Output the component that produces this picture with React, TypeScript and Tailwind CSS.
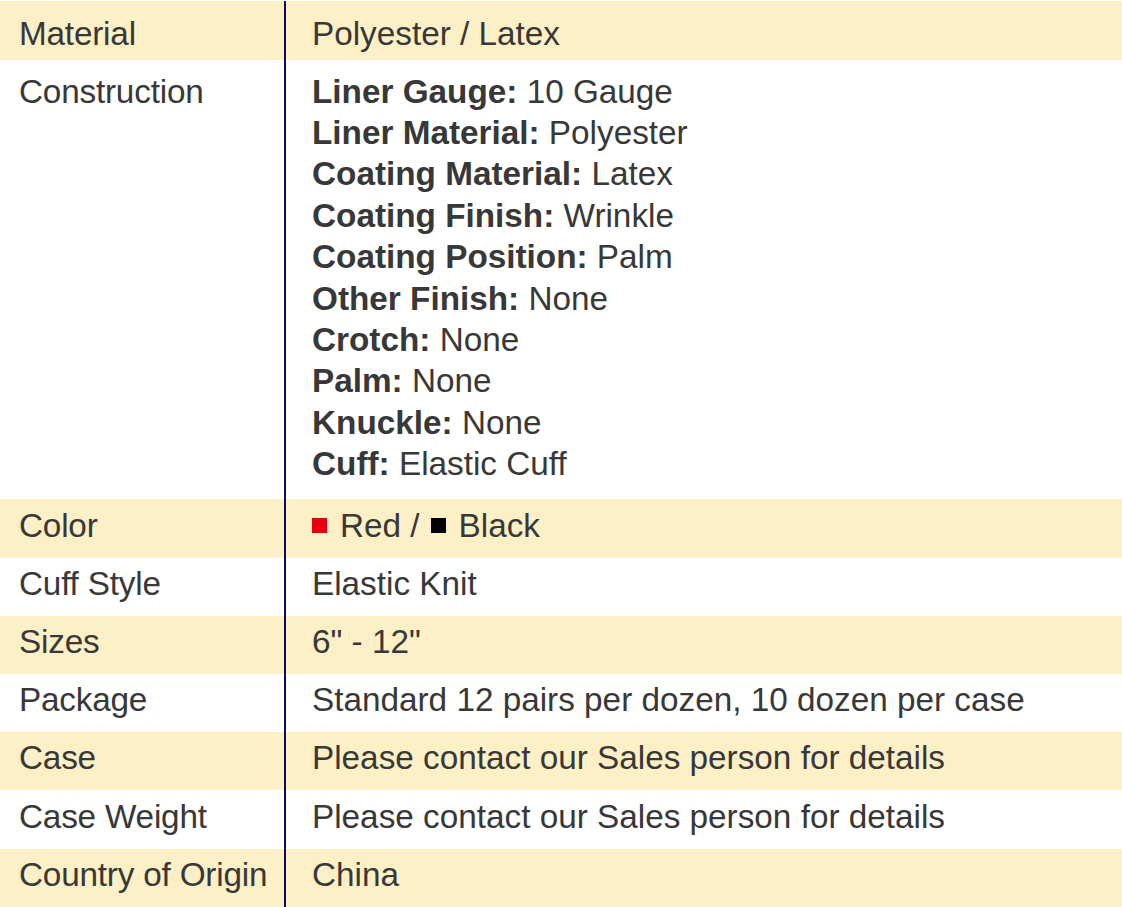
type Row = { label: string; value: React.ReactNode; shaded: boolean; pad: string };

const construction: [string, string][] = [
  ['Liner Gauge:', '10 Gauge'],
  ['Liner Material:', 'Polyester'],
  ['Coating Material:', 'Latex'],
  ['Coating Finish:', 'Wrinkle'],
  ['Coating Position:', 'Palm'],
  ['Other Finish:', 'None'],
  ['Crotch:', 'None'],
  ['Palm:', 'None'],
  ['Knuckle:', 'None'],
  ['Cuff:', 'Elastic Cuff'],
];

const normal = 'pt-[5.3px] pb-[11.5px]';

const rows: Row[] = [
  { label: 'Material', value: 'Polyester / Latex', shaded: true, pad: 'pt-[11.8px] pb-[5.8px]' },
  {
    label: 'Construction',
    shaded: false,
    pad: 'pt-[10.5px] pb-[14.8px]',
    value: (
      <div>
        {construction.map(([k, v]) => (
          <div key={k}>
            <span className="font-bold">{k}</span> {v}
          </div>
        ))}
      </div>
    ),
  },
  {
    label: 'Color',
    shaded: true,
    pad: normal,
    value: (
      <span className="flex items-center">
        <span className="inline-block w-[15px] h-[15px] bg-[#e60012] mr-[13px]" />
        Red /
        <span className="inline-block w-[15px] h-[15px] bg-black ml-[11px] mr-[13px]" />
        Black
      </span>
    ),
  },
  { label: 'Cuff Style', value: 'Elastic Knit', shaded: false, pad: normal },
  { label: 'Sizes', value: '6" - 12"', shaded: true, pad: normal },
  { label: 'Package', value: 'Standard 12 pairs per dozen, 10 dozen per case', shaded: false, pad: normal },
  { label: 'Case', value: 'Please contact our Sales person for details', shaded: true, pad: normal },
  { label: 'Case Weight', value: 'Please contact our Sales person for details', shaded: false, pad: normal },
  { label: 'Country of Origin', value: 'China', shaded: true, pad: normal },
];

export default function App() {
  return (
    <div className="w-[1122px] h-[907px] bg-white pt-px overflow-hidden font-['Liberation_Sans',Arial,sans-serif] text-[33.3px] leading-[41.4px] text-[#383838]">
      {rows.map((r) => (
        <div key={r.label} className={`flex ${r.shaded ? 'bg-[#fdf0c6]' : 'bg-white'}`}>
          <div className={`w-[286px] shrink-0 pl-[19px] border-r-2 border-[#0b0b5e] tracking-[-0.2px] ${r.pad}`}>{r.label}</div>
          <div className={`flex-1 pl-[26px] ${r.pad}`}>{r.value}</div>
        </div>
      ))}
    </div>
  );
}
